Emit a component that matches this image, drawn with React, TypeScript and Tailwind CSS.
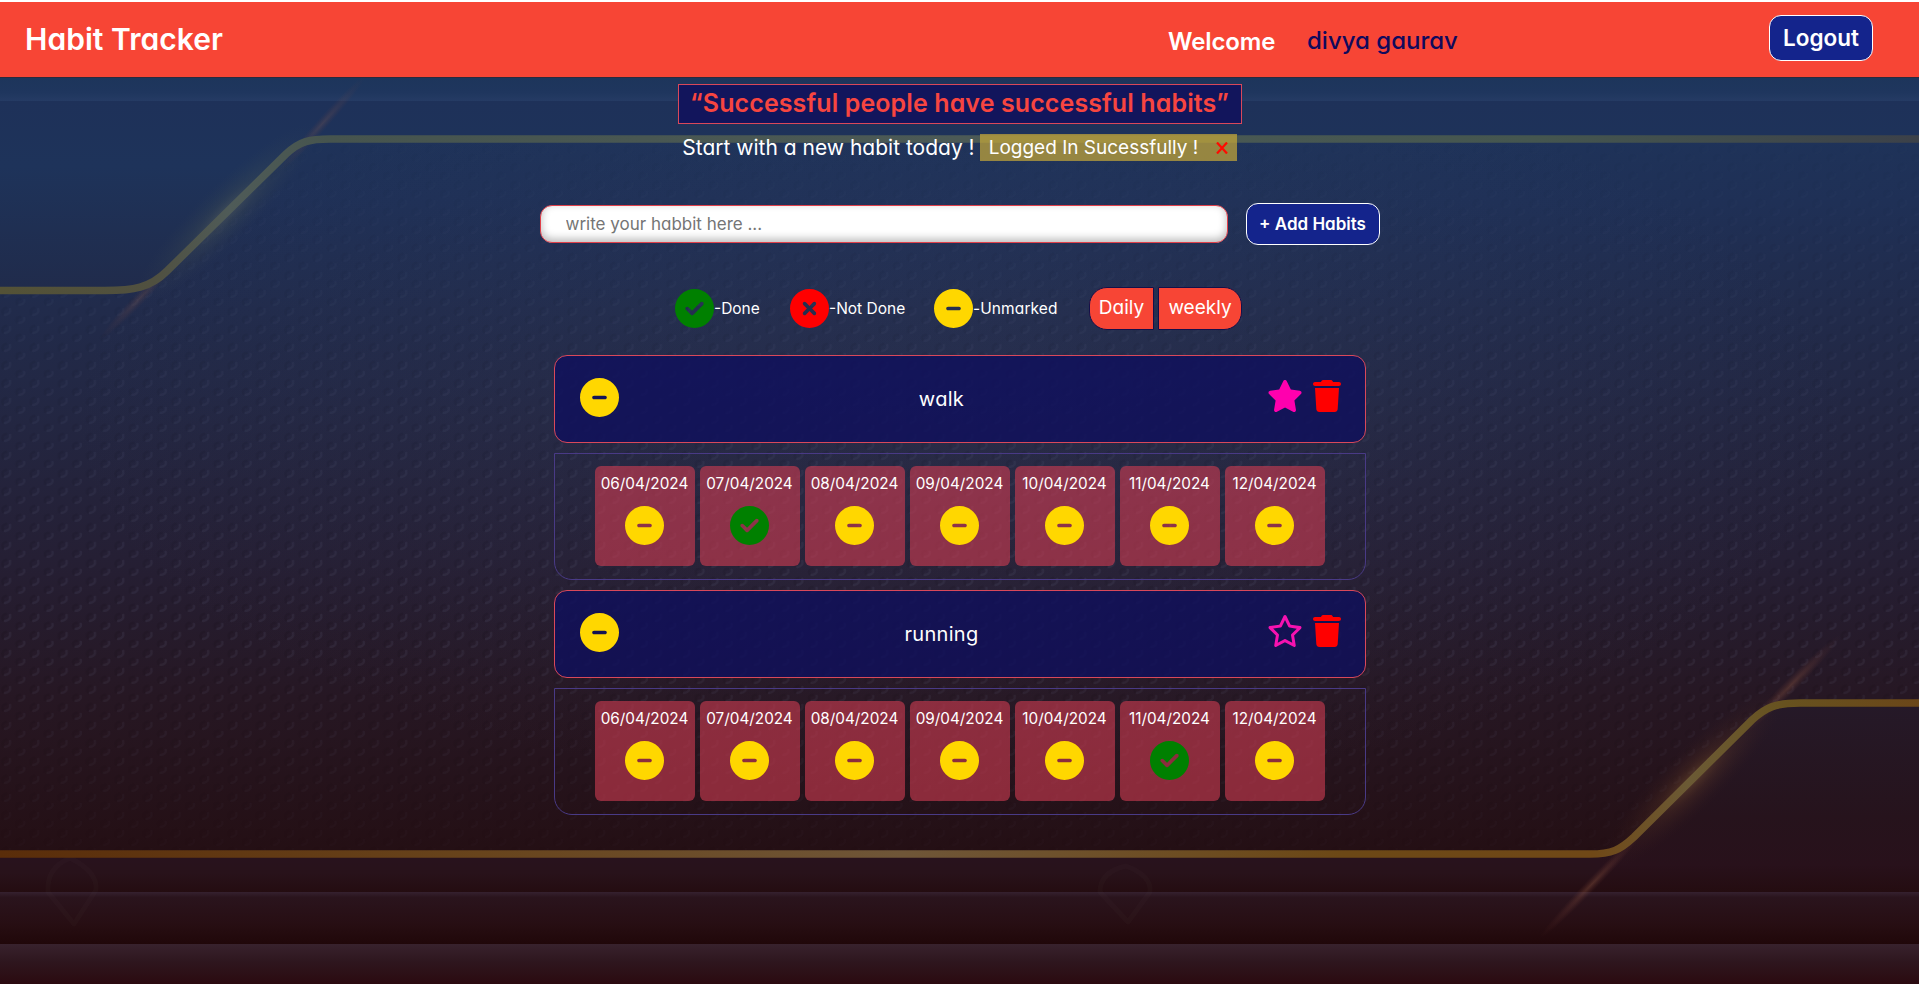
import {
  FaCircleCheck,
  FaCircleMinus,
  FaCircleXmark,
  FaRegStar,
  FaStar,
  FaTrash,
} from "react-icons/fa6";

type Status = "done" | "missed" | "unmarked";

interface Habit {
  name: string;
  favourite: boolean;
  week: Status[];
}

const DATES = [
  "06/04/2024",
  "07/04/2024",
  "08/04/2024",
  "09/04/2024",
  "10/04/2024",
  "11/04/2024",
  "12/04/2024",
];

const HABITS: Habit[] = [
  {
    name: "walk",
    favourite: true,
    week: ["unmarked", "done", "unmarked", "unmarked", "unmarked", "unmarked", "unmarked"],
  },
  {
    name: "running",
    favourite: false,
    week: ["unmarked", "unmarked", "unmarked", "unmarked", "unmarked", "done", "unmarked"],
  },
];

function StatusIcon({ status }: { status: Status }) {
  if (status === "done") return <FaCircleCheck className="size-[39px] shrink-0 text-[#008000]" />;
  if (status === "missed") return <FaCircleXmark className="size-[39px] shrink-0 text-[#ff0000]" />;
  return <FaCircleMinus className="size-[39px] shrink-0 text-[#ffd700]" />;
}

/** Decorative backdrop: dusk gradient, embossed texture and neon rails. */
function Backdrop() {
  return (
    <svg className="h-full w-full" viewBox="0 0 1919 984" preserveAspectRatio="none" aria-hidden="true">
      <defs>
        <linearGradient id="sky" gradientUnits="userSpaceOnUse" x1="0" y1="77" x2="0" y2="853">
          <stop offset="0" stopColor="#1e355c" />
          <stop offset="0.16" stopColor="#1f3056" />
          <stop offset="0.3" stopColor="#212b4b" />
          <stop offset="0.45" stopColor="#232641" />
          <stop offset="0.62" stopColor="#251f34" />
          <stop offset="0.8" stopColor="#261723" />
          <stop offset="1" stopColor="#240f14" />
        </linearGradient>
        <radialGradient id="centreLight">
          <stop offset="0" stopColor="#5a6690" stopOpacity="0.1" />
          <stop offset="1" stopColor="#5a6690" stopOpacity="0" />
        </radialGradient>
        <linearGradient id="topBand" x1="0" y1="0" x2="0" y2="1">
          <stop offset="0" stopColor="#1d355b" />
          <stop offset="0.65" stopColor="#1f365e" />
          <stop offset="1" stopColor="#253b64" />
        </linearGradient>
        <linearGradient id="leftPanel" x1="0" y1="0" x2="0" y2="1">
          <stop offset="0" stopColor="#1e3159" />
          <stop offset="0.35" stopColor="#1e335a" />
          <stop offset="1" stopColor="#202b4b" />
        </linearGradient>
        <linearGradient id="rightPanel" x1="0" y1="0" x2="0" y2="1">
          <stop offset="0" stopColor="#251928" />
          <stop offset="0.6" stopColor="#26131c" />
          <stop offset="0.85" stopColor="#28111b" />
          <stop offset="1" stopColor="#240c10" />
        </linearGradient>
        <linearGradient id="ledge" x1="0" y1="0" x2="0" y2="1">
          <stop offset="0" stopColor="#28121e" />
          <stop offset="0.5" stopColor="#28121a" />
          <stop offset="1" stopColor="#240c10" />
        </linearGradient>
        <linearGradient id="stepA" x1="0" y1="0" x2="0" y2="1">
          <stop offset="0" stopColor="#35212f" />
          <stop offset="0.1" stopColor="#2a141d" />
          <stop offset="0.6" stopColor="#270e13" />
          <stop offset="1" stopColor="#200709" />
        </linearGradient>
        <linearGradient id="stepB" x1="0" y1="0" x2="0" y2="1">
          <stop offset="0" stopColor="#38222d" />
          <stop offset="0.45" stopColor="#2e161e" />
          <stop offset="1" stopColor="#2b0a10" />
        </linearGradient>
        <linearGradient id="topRail" gradientUnits="userSpaceOnUse" x1="0" y1="0" x2="1919" y2="0">
          <stop offset="0" stopColor="#545236" />
          <stop offset="0.08" stopColor="#505040" />
          <stop offset="0.12" stopColor="#4f5b58" />
          <stop offset="0.17" stopColor="#46544e" />
          <stop offset="0.5" stopColor="#4c5a56" />
          <stop offset="0.8" stopColor="#45564f" />
          <stop offset="1" stopColor="#3c4149" />
        </linearGradient>
        <linearGradient id="bottomRail" gradientUnits="userSpaceOnUse" x1="0" y1="0" x2="1919" y2="0">
          <stop offset="0" stopColor="#5a2d0a" />
          <stop offset="0.25" stopColor="#68441c" />
          <stop offset="0.47" stopColor="#6f5638" />
          <stop offset="0.7" stopColor="#6c4816" />
          <stop offset="0.83" stopColor="#704817" />
          <stop offset="0.88" stopColor="#6b5a35" />
          <stop offset="0.93" stopColor="#67521f" />
          <stop offset="1" stopColor="#6b4719" />
        </linearGradient>
        <radialGradient id="glowTop">
          <stop offset="0" stopColor="#8a8b63" stopOpacity="0.32" />
          <stop offset="0.4" stopColor="#606a50" stopOpacity="0.16" />
          <stop offset="1" stopColor="#3c4a50" stopOpacity="0" />
        </radialGradient>
        <radialGradient id="glowBottom">
          <stop offset="0" stopColor="#a0703a" stopOpacity="0.4" />
          <stop offset="0.4" stopColor="#7a4a2a" stopOpacity="0.2" />
          <stop offset="1" stopColor="#402020" stopOpacity="0" />
        </radialGradient>
        <radialGradient id="streak">
          <stop offset="0" stopColor="#a8684c" stopOpacity="0.4" />
          <stop offset="1" stopColor="#7a3c34" stopOpacity="0" />
        </radialGradient>
        <pattern id="scales" width="28.3" height="18" patternUnits="userSpaceOnUse">
          <g fill="none" strokeWidth="2.4" strokeLinecap="round">
            <path d="M10 3 q1 5 -5 6" stroke="#9aa6c8" strokeOpacity="0.085" />
            <path d="M3 8 q-2 -5 3 -6" stroke="#000" strokeOpacity="0.08" />
            <path d="M24.2 12 q1 4 -5 5" stroke="#9aa6c8" strokeOpacity="0.085" />
            <path d="M17.2 16 q-2 -5 3 -5" stroke="#000" strokeOpacity="0.08" />
          </g>
        </pattern>
        <linearGradient id="fade" x1="0" y1="0" x2="0" y2="1">
          <stop offset="0" stopColor="#fff" stopOpacity="0.1" />
          <stop offset="0.3" stopColor="#fff" stopOpacity="0.6" />
          <stop offset="0.7" stopColor="#fff" stopOpacity="1" />
          <stop offset="1" stopColor="#fff" stopOpacity="0.2" />
        </linearGradient>
        <mask id="scaleMask">
          <rect y="139" width="1919" height="714" fill="url(#fade)" />
        </mask>
      </defs>

      <rect width="1919" height="984" fill="url(#sky)" />
      <ellipse cx="960" cy="420" rx="900" ry="380" fill="url(#centreLight)" />
      <rect y="139" width="1919" height="714" fill="url(#scales)" mask="url(#scaleMask)" />

      <path d="M0 100H1919V139H325Q303 139 286 155L167 272Q148 290 122 290H0Z" fill="url(#leftPanel)" />
      <rect y="77" width="1919" height="24" fill="url(#topBand)" />
      <rect y="76.5" width="1919" height="1.5" fill="#2c2a3c" />

      <path d="M0 854H1597Q1617 854 1633 838L1753 720Q1772 703 1800 703H1919V893H0Z" fill="url(#rightPanel)" />
      <rect y="854" width="1600" height="39" fill="url(#ledge)" />
      <rect y="892" width="1919" height="53" fill="url(#stepA)" />
      <rect y="944" width="1919" height="40" fill="url(#stepB)" />

      <g fill="none" stroke="#6a5a58" strokeOpacity="0.06" strokeWidth="5" strokeLinejoin="round">
        <path d="M70 858Q98 872 96 890L74 924L48 892Q46 868 70 858Z" />
        <path d="M1126 866Q1152 876 1150 892L1128 922L1100 892Q1100 872 1126 866Z" />
      </g>

      <ellipse cx="226" cy="213" rx="125" ry="28" fill="url(#glowTop)" transform="rotate(-44.5 226 213)" />
      <ellipse cx="322" cy="124" rx="65" ry="6" fill="url(#streak)" opacity="0.55" transform="rotate(-48 322 124)" />
      <ellipse cx="140" cy="298" rx="58" ry="6" fill="url(#streak)" opacity="0.55" transform="rotate(-46 140 298)" />
      <path
        d="M0 290.5H105C133 290.5 150 288 167 271L286 154C300 141 310 139 330 139H1919"
        fill="none"
        stroke="url(#topRail)"
        strokeWidth="7.5"
      />

      <ellipse cx="1693" cy="779" rx="125" ry="30" fill="url(#glowBottom)" transform="rotate(-44.5 1693 779)" />
      <ellipse cx="1790" cy="686" rx="72" ry="7" fill="url(#streak)" opacity="0.8" transform="rotate(-45 1790 686)" />
      <ellipse cx="1592" cy="884" rx="75" ry="6" fill="url(#streak)" opacity="0.8" transform="rotate(-46 1592 884)" />
      <path
        d="M0 854H1590C1612 854 1620 850 1634 837L1752 720C1766 707 1776 703 1800 703H1919"
        fill="none"
        stroke="url(#bottomRail)"
        strokeWidth="7.5"
      />
    </svg>
  );
}

function Header() {
  return (
    <header className="flex h-[77px] items-start border-t-2 border-white bg-[#f74535] font-semibold text-white">
      <h1 className="ml-[25px] mt-[17px] w-[1143px] text-[30px] leading-10 tracking-[0.05px]">Habit Tracker</h1>
      <p className="mt-[22px] w-[139px] text-[24px] leading-9 tracking-[-0.1px]">Welcome</p>
      <p className="mt-[21px] w-[462px] text-[24px] font-medium leading-9 text-[#100a5c]">divya gaurav</p>
      <button className="mt-[13px] flex h-[46px] w-[104px] items-center justify-center rounded-xl border border-white bg-[#14248c] text-[22.5px]">
        Logout
      </button>
    </header>
  );
}

function Legend() {
  return (
    <div className="mt-[41px] flex h-[44px] items-center text-[15.5px] text-white">
      <div className="flex w-[115px] items-center">
        <StatusIcon status="done" />
        <span className="pt-[1px]">-Done</span>
      </div>
      <div className="flex w-[144px] items-center">
        <StatusIcon status="missed" />
        <span className="pt-[1px]">-Not Done</span>
      </div>
      <div className="flex w-[155px] items-center">
        <StatusIcon status="unmarked" />
        <span className="pt-[1px] tracking-[0.1px]">-Unmarked</span>
      </div>
      <div className="mr-[2px] flex gap-1 text-[19px]">
        <button className="h-[43px] w-[65px] rounded-l-[18px] border border-[#14104a] bg-[#f74535]">Daily</button>
        <button className="h-[43px] w-[84px] rounded-r-[18px] border border-[#14104a] bg-[#f74535]">weekly</button>
      </div>
    </div>
  );
}

function HabitCard({ habit }: { habit: Habit }) {
  return (
    <section className="w-[812px] text-white">
      <div className="flex h-[88px] items-center rounded-[13px] border border-[#d9485a] bg-[#0f0f5c]/80 pl-[25px] pr-[24px]">
        <div className="w-[100px] -translate-y-[2px]">
          <StatusIcon status="unmarked" />
        </div>
        <p className="w-[524px] text-center text-[20px] tracking-[0.3px]">{habit.name}</p>
        <div className="flex flex-1 -translate-y-[3px] items-center justify-end gap-[12px]">
          {habit.favourite ? (
            <FaStar className="-mr-[2px] h-[32px] w-[36px] text-[#ff00ae]" />
          ) : (
            <FaRegStar className="-mr-[2px] h-[32px] w-[36px] text-[#f712b0]" />
          )}
          <FaTrash className="h-[32px] w-[28px] text-[#ff0000]" />
        </div>
      </div>
      <div className="mt-[10px] flex h-[127px] justify-center gap-[5px] rounded-b-[18px] border border-[#493a86] pt-[12px]">
        {DATES.map((date, i) => (
          <div key={date} className="flex h-[100px] w-[100px] flex-col items-center rounded-[6px] bg-[#d03c51]/60">
            <span className="h-[40px] text-[15.3px] leading-[35px]">{date}</span>
            <StatusIcon status={habit.week[i]} />
          </div>
        ))}
      </div>
    </section>
  );
}

export default function App() {
  return (
    <div className="grid h-[984px] w-[1919px] overflow-hidden bg-[#240f14] font-['Inter','Noto_Sans',sans-serif] [font-feature-settings:'cv11']">
      <div className="h-[984px] [grid-area:1/1]">
        <Backdrop />
      </div>
      <div className="z-10 flex flex-col [grid-area:1/1]">
        <Header />
        <main className="flex flex-col items-center pt-[7px]">
          <h2 className="flex h-[40px] w-[564px] items-center justify-center whitespace-nowrap border border-[#d9485a] bg-[#12155c] text-[25px] font-semibold tracking-[0.1px] text-[#f74540]">
            “Successful people have successful habits”
          </h2>
          <div className="mt-[10px] flex items-center text-white">
            <p className="mr-[5px] whitespace-nowrap text-[21px] leading-[27px]">Start with a new habit today !</p>
            <div className="flex h-[27px] w-[257px] items-center justify-between bg-[#c9a938]/70 pl-[9px] pr-[9px]">
              <span className="whitespace-nowrap pt-[1px] text-[19px]">Logged In Sucessfully !</span>
              <svg className="size-[12px]" viewBox="0 0 12 12" aria-label="Dismiss">
                <path d="M1 0.5L11 11.5M11 0.5L1 11.5" stroke="#ff0a00" strokeWidth="2.2" />
              </svg>
            </div>
          </div>
          <form className="mt-[42px] flex items-center gap-[18px]">
            <input
              className="h-[38px] w-[688px] rounded-xl border border-[#e0404a] bg-white pl-[25px] text-[17px] text-gray-700 shadow-[inset_0_-3px_8px_rgba(0,0,0,0.28)] placeholder:text-[#757575]"
              placeholder="write your habbit here ..."
            />
            <button
              type="button"
              className="h-[42px] w-[134px] rounded-xl border border-white bg-[#14248c] pt-[1px] text-[17px] font-semibold text-white"
            >
              + Add Habits
            </button>
          </form>
          <Legend />
          <div className="mt-[25px] flex flex-col gap-[10px]">
            {HABITS.map((habit) => (
              <HabitCard key={habit.name} habit={habit} />
            ))}
          </div>
        </main>
      </div>
    </div>
  );
}
